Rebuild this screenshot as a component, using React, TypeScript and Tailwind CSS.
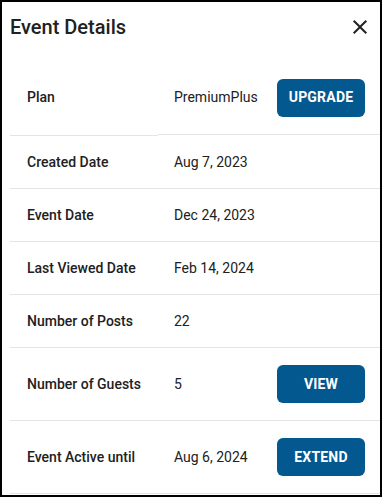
import React from "react";

type Row = { label: string; value: string; action?: string };

const rows: Row[] = [
  { label: "Created Date", value: "Aug 7, 2023" },
  { label: "Event Date", value: "Dec 24, 2023" },
  { label: "Last Viewed Date", value: "Feb 14, 2024" },
  { label: "Number of Posts", value: "22" },
  { label: "Number of Guests", value: "5", action: "VIEW" },
  { label: "Event Active until", value: "Aug 6, 2024", action: "EXTEND" },
];

function Btn({ children }: { children: React.ReactNode }) {
  return (
    <button className="w-[88px] h-[38px] rounded-[6px] bg-[#035890] text-white text-[14px] font-bold tracking-[0.2px]">
      {children}
    </button>
  );
}

export default function App() {
  return (
    <div
      className="w-[383px] h-[498px] bg-white"
      style={{ fontFamily: "Roboto, 'Liberation Sans', sans-serif" }}
    >
      <div className="w-[382px] h-[497px] border-2 border-black flex flex-col text-[#212121]">
        <div className="h-[59px] flex items-start justify-between pl-[8px] pr-[8px] pt-[14px]">
          <div className="text-[20px] font-medium leading-[20px] mt-[1px]">Event Details</div>
          <svg width="24" height="24" viewBox="0 0 24 24" className="-mt-[1px]">
            <path
              d="M19 6.41 17.59 5 12 10.59 6.41 5 5 6.41 10.59 12 5 17.59 6.41 19 12 13.41 17.59 19 19 17.59 13.41 12z"
              fill="#212121"
            />
          </svg>
        </div>
        <div className="ml-[8px] flex flex-col text-[14px]">
          <div className="flex items-center h-[73px]">
            <div className="w-[148px] pl-[17px] font-medium">Plan</div>
            <div className="flex-1 pl-[16px]">PremiumPlus</div>
            <div className="pr-[15px]">
              <Btn>UPGRADE</Btn>
            </div>
          </div>
          <div className="flex h-[2px]">
            <div className="w-[148px] flex flex-col">
              <div className="h-[1px]" />
              <div className="h-[1px] bg-[#e4e4e4]" />
            </div>
            <div className="flex-1 flex flex-col">
              <div className="h-[1px] bg-[#e4e4e4]" />
              <div className="h-[1px]" />
            </div>
          </div>
          {rows.map((r) => (
            <div
              key={r.label}
              className={`flex items-center border-b border-[#e4e4e4] ${r.action ? "h-[73px]" : "h-[53px]"}`}
            >
              <div className="w-[148px] pl-[17px] font-medium">{r.label}</div>
              <div className="flex-1 pl-[16px]">{r.value}</div>
              {r.action && (
                <div className="pr-[15px]">
                  <Btn>{r.action}</Btn>
                </div>
              )}
            </div>
          ))}
        </div>
      </div>
    </div>
  );
}
